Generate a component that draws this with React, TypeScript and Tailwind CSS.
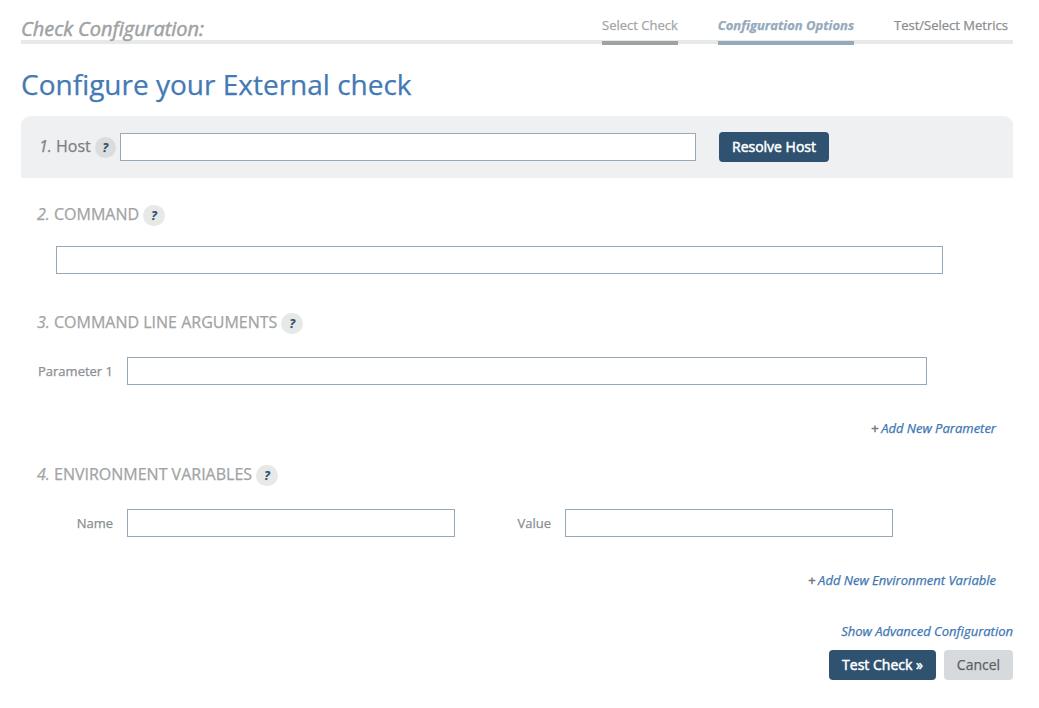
import type { ReactNode } from "react";

function Help({ muted = false }: { muted?: boolean }) {
  return (
    <button
      type="button"
      className={
        (muted ? "mt-[3px] w-[21px] bg-[#dadcde] " : "mt-[2px] w-[22px] bg-[#e6e9e8] ") +
        "ml-1 h-[21px] shrink-0 rounded-full text-center text-[12px] leading-[21px] font-bold text-[#2e5270] italic"
      }
    >
      ?
    </button>
  );
}

function Field({ className, label }: { className: string; label: string }) {
  return (
    <input
      aria-label={label}
      className={"h-7 shrink-0 border border-[#95a9b8] bg-white px-2 outline-none " + className}
    />
  );
}

function SectionTitle({ n, children }: { n: number; children: ReactNode }) {
  return (
    <h2 className="flex h-6 items-start pl-4 text-[16px] leading-[22px] whitespace-pre text-[#a1a3a4]">
      <span className="w-[17px] italic">{n}.</span>
      <span>{children}</span>
      <Help />
    </h2>
  );
}

function ActionLink({ children }: { children: ReactNode }) {
  return (
    <div className="flex h-5 justify-end pr-[17px] text-[13px] leading-5 text-[#777c80]">
      <span className="mr-[2.5px] [-webkit-text-stroke:0.5px_currentColor]">+</span>
      <a className="text-[#3d76b2] italic">{children}</a>
    </div>
  );
}

export default function App() {
  return (
    <main className="h-[708px] overflow-hidden bg-white pl-[21px] font-['Open_Sans',sans-serif] [-webkit-text-stroke:0.25px_currentColor]">
      <div className="flex w-[992px] flex-col">
        <header className="flex h-11 justify-between border-b-4 border-[#e7e8e8]">
          <div className="pt-[15px] text-[20px] leading-7 tracking-[-0.03px] text-[#a0a2a4] italic [-webkit-text-stroke:0.5px_currentColor]">
            Check Configuration:
          </div>
          <nav className="flex h-[45px] gap-10 pr-[5px] text-[13px] leading-5 whitespace-nowrap">
            <a className="border-b-4 border-[#9fa2a3] pt-[15px] text-[#a3a5a7]">Select Check</a>
            <a className="border-b-4 border-[#94aaba] pt-[15px] font-bold text-[#94a9bb] italic">Configuration Options</a>
            <a className="pt-[15px] text-[#8b8d8f]">Test/Select Metrics</a>
          </nav>
        </header>

        <h1 className="mt-5 text-[28px] leading-10 text-[#437ab4]">Configure your External check</h1>

        <section className="mt-3 flex h-[62px] items-start rounded-t-[9px] bg-[#eff0f2] pl-[18px]">
          <div className="flex w-[81px] pt-[18px] text-[16px] leading-6 text-[#7d8082]">
            <span className="w-[17px] italic">1.</span>
            <span>Host</span>
            <Help muted />
          </div>
          <Field label="Host" className="mt-[17px] w-[576px]" />
          <button type="button" className="mt-4 ml-[23px] h-[30px] w-[110px] rounded bg-[#2e5270] pb-0.5 text-[14px] text-white [-webkit-text-stroke:0.5px_currentColor]">
            Resolve Host
          </button>
        </section>

        <section className="pt-[25px]">
          <SectionTitle n={2}>COMMAND</SectionTitle>
          <div className="mt-[19px] flex pl-[35px]">
            <Field label="Command" className="w-[887px]" />
          </div>
        </section>

        <section className="pt-[37px]">
          <SectionTitle n={3}>COMMAND LINE ARGUMENTS</SectionTitle>
          <div className="mt-[22px] flex items-center">
            <label className="w-[92px] pt-0.5 text-right text-[13px] text-[#8b8e91]">Parameter 1</label>
            <Field label="Parameter 1" className="ml-[14px] w-[800px]" />
          </div>
          <div className="pt-[33px]">
            <ActionLink>Add New Parameter</ActionLink>
          </div>
        </section>

        <section className="pt-[25px]">
          <SectionTitle n={4}>ENVIRONMENT VARIABLES</SectionTitle>
          <div className="mt-[22px] flex items-center text-[13px] text-[#8b8e91]">
            <label className="w-[92px] pt-0.5 text-right">Name</label>
            <Field label="Name" className="ml-[14px] w-[328px]" />
            <label className="w-24 pt-0.5 text-right">Value</label>
            <Field label="Value" className="ml-[14px] w-[328px]" />
          </div>
          <div className="pt-[33px]">
            <ActionLink>Add New Environment Variable</ActionLink>
          </div>
        </section>

        <footer className="flex flex-col items-end pt-[31px]">
          <a className="text-[13px] leading-5 text-[#3d76b2] italic">Show Advanced Configuration</a>
          <div className="mt-[9px] flex gap-2 text-[14px]">
            <button type="button" className="h-[30px] w-[107px] rounded bg-[#2e5270] pb-0.5 text-white [-webkit-text-stroke:0.5px_currentColor]">
              Test Check »
            </button>
            <button type="button" className="h-[30px] w-[69px] rounded bg-[#d6dadd] pb-0.5 text-[#5a6065]">
              Cancel
            </button>
          </div>
        </footer>
      </div>
    </main>
  );
}
